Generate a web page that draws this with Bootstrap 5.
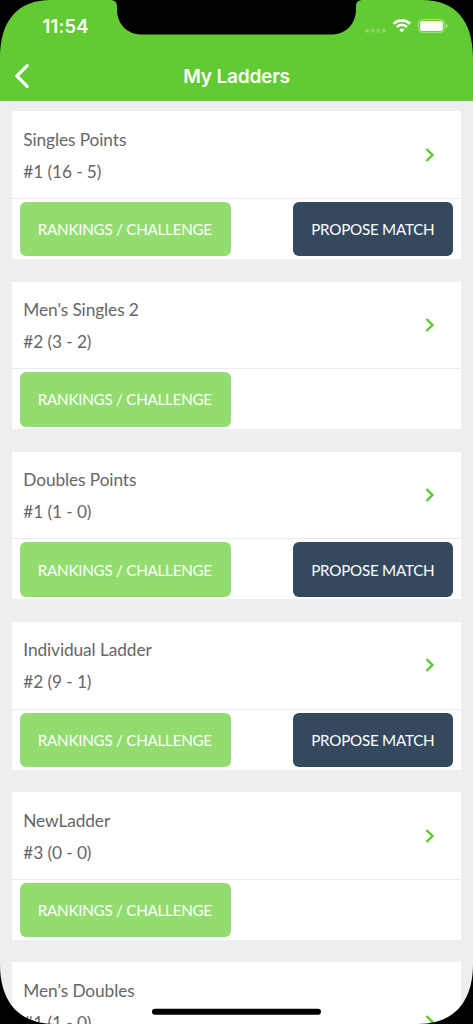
<!DOCTYPE html>
<html lang="en">
<head>
    <meta charset="UTF-8">
    <meta name="viewport" content="width=device-width, initial-scale=1">
    <title>My Ladders</title>
    <link href="https://cdn.jsdelivr.net/npm/bootstrap@5.3.0/dist/css/bootstrap.min.css" rel="stylesheet">
    <style>
        body {
            font-family: Lato, "Liberation Sans", sans-serif;
            background: #eee;
            color: #666;
            height: 1024px;
            overflow: hidden;
        }
        .app-header {
            height: 101px;
            background: #62ca32;
            color: #fff;
            font-family: Inter, "Liberation Sans", sans-serif;
        }
        .status-bar { height: 52px; padding: 0 25px 0 42.5px; }
        .clock { font-size: 18.4px; font-weight: 600; line-height: 1; letter-spacing: .2px; }
        .title-bar { height: 49px; padding: 0 14px; }
        .title-bar h1 { font-size: 19.2px; font-weight: 600; line-height: 1; letter-spacing: -.28px; }
        .title-side { width: 16px; margin-bottom: 1px; }
        .ladder-list { height: 923px; overflow: hidden; padding: 10.3px 11.7px 0; gap: 22.65px; }
        .ladder { height: 147.6px; border-radius: 0; border: 0; flex: none; }
        .ladder-info {
            height: 87.6px;
            padding: 12.3px 26.8px 0 11.6px;
            border-bottom: 1px solid #ececec;
            font-size: 17.3px;
            letter-spacing: -.09px;
            line-height: 32px;
        }
        .ladder-tall .ladder-info { height: 119.6px; }
        .ladder-info svg { margin-top: 24px; }
        .ladder-tall .ladder-info svg { margin-top: 40px; }
        .ladder-actions { padding: 3px 8px 0; }
        .btn-ladder {
            height: 54.6px;
            padding: .6px 1px 0 0;
            border: 0;
            border-radius: 6px;
            color: #fff;
            font-size: 15.2px;
            letter-spacing: -.25px;
        }
        .btn-rank { width: 211.3px; background: #92dc70; }
        .btn-propose { width: 160px; background: #34495e; }
        .device-frame { pointer-events: none; }
    </style>
</head>
<body>

<header class="app-header">
    <div class="status-bar d-flex justify-content-between align-items-center">
        <span class="clock">11:54</span>
        <!-- signal, wifi, battery -->
        <svg width="84" height="16" viewBox="0 0 84 16" fill="#fff">
            <g opacity=".25">
                <circle cx="3" cy="12.7" r="2.1"/>
                <circle cx="8.7" cy="12.7" r="2.1"/>
                <circle cx="14.4" cy="12.7" r="2.1"/>
                <circle cx="20.1" cy="12.7" r="2.1"/>
            </g>
            <g fill="none" stroke="#fff" stroke-width="2.7">
                <path d="M29.6 5.9C34.3 1.3 41.3 1.3 46 5.9"/>
                <path d="M32.7 9.1C35.7 6.2 39.9 6.2 42.9 9.1"/>
            </g>
            <path d="M35.2 11.5Q37.8 9.4 40.4 11.5L37.8 14.3Z"/>
            <rect x="54.3" y="1.6" width="26" height="12.7" rx="3.8" fill="none" stroke="#fff" stroke-opacity=".45"/>
            <rect x="56" y="3.1" width="22.8" height="9.8" rx="2.2"/>
            <path d="M81.8 5.8Q83.6 6.4 83.6 8T81.8 10.2Z" opacity=".5"/>
        </svg>
    </div>
    <div class="title-bar d-flex justify-content-between align-items-center">
        <svg class="title-side" height="26" viewBox="0 0 16 26" fill="none" stroke="#fff" stroke-width="3.2" stroke-linecap="round" stroke-linejoin="round">
            <path d="M13.2 2.7L2.8 13L13.2 23.3"/>
        </svg>
        <h1 class="m-0">My Ladders</h1>
        <span class="title-side"></span>
    </div>
</header>

<main id="ladders" class="ladder-list d-flex flex-column"></main>

<!-- rounded screen corners, notch and home indicator -->
<svg class="device-frame position-absolute top-0 start-0" width="473" height="1024" viewBox="0 0 473 1024">
    <path d="M0 0H51C18 0 0 20 0 58Z"/>
    <path d="M473 0H422C455 0 473 20 473 58Z"/>
    <path d="M0 1024H55C20 1024 0 1003 0 964Z"/>
    <path d="M473 1024H418C453 1024 473 1003 473 964Z"/>
    <path d="M110 0C115 0 117 2 117 7V9C117 24 127 34.5 142 34.5H331C346 34.5 356 24 356 9V7C356 2 358 0 363 0Z"/>
    <rect x="152" y="1008.7" width="169" height="6" rx="3"/>
</svg>

<script src="https://cdn.jsdelivr.net/npm/bootstrap@5.3.0/dist/js/bootstrap.bundle.min.js"></script>
<script>
    const ladders = [
        { name: 'Singles Points', record: '#1 (16 - 5)', propose: true },
        { name: "Men's Singles 2", record: '#2 (3 - 2)', propose: false },
        { name: 'Doubles Points', record: '#1 (1 - 0)', propose: true },
        { name: 'Individual Ladder', record: '#2 (9 - 1)', propose: true },
        { name: 'NewLadder', record: '#3 (0 - 0)', propose: false },
        { name: "Men's Doubles", record: '#1 (1 - 0)', propose: false, tall: true },
    ];

    const list = document.getElementById('ladders');

    ladders.forEach(ladder => {
        const proposeButton = ladder.propose
            ? '<button type="button" class="btn btn-ladder btn-propose">PROPOSE MATCH</button>'
            : '';

        list.insertAdjacentHTML('beforeend', `
            <div class="card ladder ${ladder.tall ? 'ladder-tall' : ''}">
                <div class="ladder-info d-flex justify-content-between">
                    <div>
                        <div>${ladder.name}</div>
                        <div>${ladder.record}</div>
                    </div>
                    <svg width="10" height="14" viewBox="0 0 10 14" fill="none" stroke="#5bcb2c" stroke-width="2.4">
                        <path d="M1.4 1L7.5 7L1.4 13"/>
                    </svg>
                </div>
                <div class="ladder-actions d-flex justify-content-between">
                    <button type="button" class="btn btn-ladder btn-rank">RANKINGS / CHALLENGE</button>
                    ${proposeButton}
                </div>
            </div>
        `);
    });
</script>

</body>
</html>
